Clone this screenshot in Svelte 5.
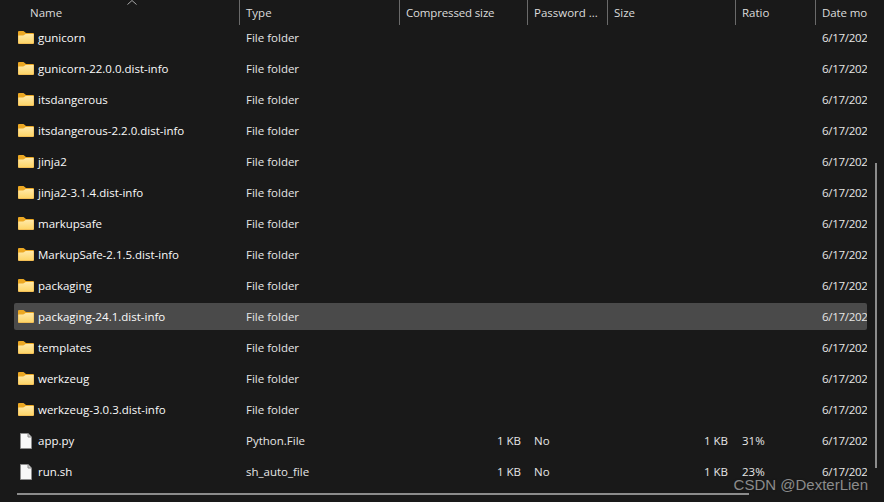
<script lang="ts">
  const columns = [
    { label: 'Name', cls: 'name' },
    { label: 'Type', cls: 'type' },
    { label: 'Compressed size', cls: 'comp' },
    { label: 'Password ...', cls: 'pass' },
    { label: 'Size', cls: 'size' },
    { label: 'Ratio', cls: 'ratio' },
    { label: 'Date mo', cls: 'date' }
  ];

  const folders = [
    'gunicorn',
    'gunicorn-22.0.0.dist-info',
    'itsdangerous',
    'itsdangerous-2.2.0.dist-info',
    'jinja2',
    'jinja2-3.1.4.dist-info',
    'markupsafe',
    'MarkupSafe-2.1.5.dist-info',
    'packaging',
    'packaging-24.1.dist-info',
    'templates',
    'werkzeug',
    'werkzeug-3.0.3.dist-info'
  ];

  const files = [
    { name: 'app.py', type: 'Python.File', ratio: '31%' },
    { name: 'run.sh', type: 'sh_auto_file', ratio: '23%' }
  ];

  const selected = 'packaging-24.1.dist-info';
</script>

<div class="explorer">
  <svg class="defs" width="0" height="0" aria-hidden="true">
    <defs>
      <linearGradient id="folder-fill" x1="0" y1="0" x2="0" y2="1">
        <stop offset="0" stop-color="#ffe9a8" />
        <stop offset="1" stop-color="#fdd568" />
      </linearGradient>
    </defs>
  </svg>

  <div class="header">
    {#each columns as col}
      <div class="head-cell {col.cls}">{col.label}</div>
    {/each}
    <svg class="caret" width="10" height="5" viewBox="0 0 10 5" aria-hidden="true">
      <path d="M.5 4.5 5 .5l4.5 4" fill="none" stroke="#a8a8a8" stroke-width="1" />
    </svg>
  </div>

  <div class="list">
    {#each folders as name}
      <div class="row" class:selected={name === selected}>
        <div class="cell name">
          <svg class="icon" width="16" height="13" viewBox="0 0 16 13" aria-hidden="true">
            <path d="M0 1a1 1 0 0 1 1-1h4.5L8 2h7a1 1 0 0 1 1 1v2H0z" fill="#eca823" />
            <path d="M0 5h5.2L7.8 3H15a1 1 0 0 1 1 1v8a1 1 0 0 1-1 1H1a1 1 0 0 1-1-1z" fill="#efb750" />
            <path d="M.4 4.6h4.9L7.8 3H15.5v9.3H.4z" fill="url(#folder-fill)" />
          </svg>
          <span>{name}</span>
        </div>
        <div class="cell type">File folder</div>
        <div class="cell date">6/17/202</div>
      </div>
    {/each}
    {#each files as file}
      <div class="row">
        <div class="cell name">
          <svg class="icon file" width="12" height="16" viewBox="0 0 12 16" aria-hidden="true">
            <path d="M.5.5h7.6l3.4 3.4v11.6H.5z" fill="#f8f8f8" stroke="#8c8c8c" />
            <path d="M8 .8V4h3.2" fill="#cfcfcf" stroke="#8c8c8c" />
          </svg>
          <span>{file.name}</span>
        </div>
        <div class="cell type">{file.type}</div>
        <div class="cell comp">1 KB</div>
        <div class="cell pass">No</div>
        <div class="cell size">1 KB</div>
        <div class="cell ratio">{file.ratio}</div>
        <div class="cell date">6/17/202</div>
      </div>
    {/each}
  </div>

  <div class="scroll-v"></div>
  <div class="scroll-h"></div>
  <div class="watermark">CSDN @DexterLien</div>
</div>

<style>
  :global(body) {
    margin: 0;
    background: #191919;
  }

  .explorer {
    position: relative;
    width: 884px;
    height: 502px;
    overflow: hidden;
    background: #191919;
    color: #f0f0f0;
    font-family: "Open Sans", "Noto Sans", sans-serif;
    font-size: 11.5px;
  }

  .defs {
    position: absolute;
  }

  .header {
    position: relative;
    display: flex;
    width: 868px;
    height: 25px;
    overflow: hidden;
    color: #dcdcdc;
  }

  .head-cell {
    flex: none;
    box-sizing: border-box;
    height: 25px;
    line-height: 26px;
    padding-left: 6px;
    border-right: 1px solid #6a6a6a;
    white-space: nowrap;
  }

  .head-cell.name { width: 240px; padding-left: 30px; }
  .head-cell.type { width: 160px; }
  .head-cell.comp { width: 128px; letter-spacing: -0.15px; }
  .head-cell.pass { width: 80px; }
  .head-cell.size { width: 128px; }
  .head-cell.ratio { width: 80px; }
  .head-cell.date { width: 53px; border-right: 0; letter-spacing: -0.1px; }

  .caret {
    position: absolute;
    left: 127px;
    top: 0;
  }

  .list {
    display: flex;
    flex-direction: column;
    gap: 4px;
    margin-top: -1px;
    padding-left: 14px;
    width: 853px;
  }

  .row {
    flex: none;
    display: flex;
    height: 27px;
    line-height: 27px;
    overflow: hidden;
    border-radius: 2px;
    white-space: nowrap;
  }

  .row.selected {
    background: #4a4a4a;
  }

  .cell {
    flex: none;
    box-sizing: border-box;
    padding-left: 6px;
    color: #e6e6e6;
  }

  .cell.name {
    display: flex;
    align-items: center;
    gap: 4px;
    width: 226px;
    padding-left: 4px;
    color: #fafafa;
  }

  .icon { flex: none; }
  .icon.file { margin: 0 2px; }

  .cell.type { width: 160px; }
  .cell.comp { width: 128px; padding: 0 7px 0 0; text-align: right; }
  .cell.pass { width: 80px; }
  .cell.size { width: 128px; padding: 0 8px 0 0; text-align: right; }
  .cell.ratio { width: 80px; }
  .cell.date { margin-left: auto; width: 51px; letter-spacing: -0.3px; }

  .scroll-v {
    position: absolute;
    left: 875px;
    top: 163px;
    width: 2px;
    height: 305px;
    background: #8c8c8c;
  }

  .scroll-h {
    position: absolute;
    left: 17px;
    top: 493px;
    width: 732px;
    height: 2px;
    background: #8c8c8c;
  }

  .watermark {
    position: absolute;
    right: 16px;
    top: 475px;
    font-family: "Liberation Sans", sans-serif;
    font-size: 15px;
    line-height: 20px;
    color: #8b8b8b;
    text-shadow: 0 0 2px #191919;
  }
</style>
